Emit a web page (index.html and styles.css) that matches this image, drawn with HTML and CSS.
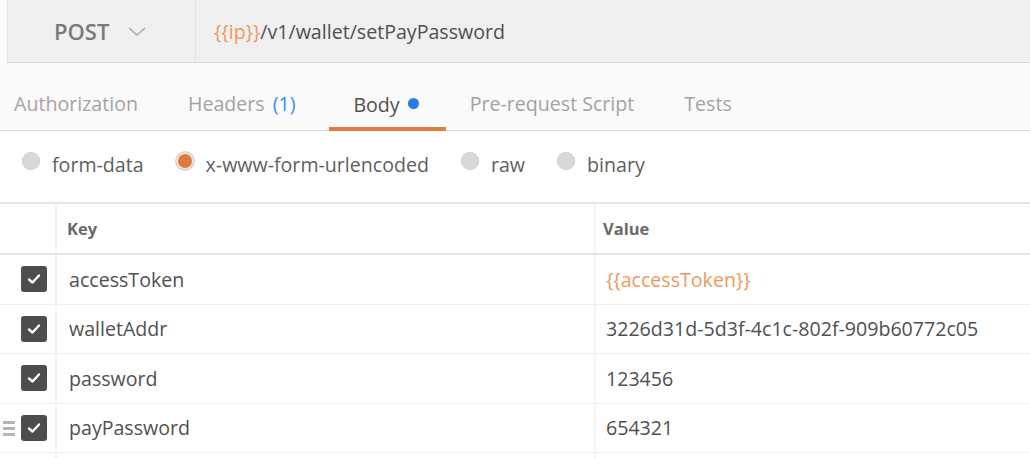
FILE: index.html
```html
<!DOCTYPE html>
<html>
<head>
<meta charset="utf-8">
<link rel="stylesheet" href="styles.css">
</head>
<body>
<div class="top">
  <div class="reqbar">
    <div class="method">
      <span class="method-name">POST</span>
      <svg class="chev" width="18" height="10" viewBox="0 0 18 10"><path d="M1 1 L9 8 L17 1" fill="none" stroke="#a8a8a8" stroke-width="1.6"/></svg>
    </div>
    <div class="url"><span class="var">{{ip}}</span>/v1/wallet/setPayPassword</div>
  </div>
  <div class="tabs">
    <div class="tab first">Authorization</div>
    <div class="tab">Headers <span class="count">(1)</span></div>
    <div class="tab active">Body <span class="dot"></span></div>
    <div class="tab">Pre-request Script</div>
    <div class="tab">Tests</div>
  </div>
</div>
<div class="modes">
  <label class="mode"><span class="radio"></span>form-data</label>
  <label class="mode"><span class="radio on"></span>x-www-form-urlencoded</label>
  <label class="mode"><span class="radio"></span>raw</label>
  <label class="mode"><span class="radio"></span>binary</label>
</div>
<div class="table">
  <div class="row head">
    <div class="c0"></div>
    <div class="c1">Key</div>
    <div class="c2">Value</div>
  </div>
  <div class="row">
    <div class="c0"><span class="cb"><svg width="14" height="12" viewBox="0 0 14 12"><path d="M2 6.5 L5.5 9.5 L12 2.5" fill="none" stroke="#fff" stroke-width="2.4" stroke-linecap="round" stroke-linejoin="round"/></svg></span></div>
    <div class="c1">accessToken</div>
    <div class="c2 var">{{accessToken}}</div>
  </div>
  <div class="row">
    <div class="c0"><span class="cb"><svg width="14" height="12" viewBox="0 0 14 12"><path d="M2 6.5 L5.5 9.5 L12 2.5" fill="none" stroke="#fff" stroke-width="2.4" stroke-linecap="round" stroke-linejoin="round"/></svg></span></div>
    <div class="c1">walletAddr</div>
    <div class="c2">3226d31d-5d3f-4c1c-802f-909b60772c05</div>
  </div>
  <div class="row">
    <div class="c0"><span class="cb"><svg width="14" height="12" viewBox="0 0 14 12"><path d="M2 6.5 L5.5 9.5 L12 2.5" fill="none" stroke="#fff" stroke-width="2.4" stroke-linecap="round" stroke-linejoin="round"/></svg></span></div>
    <div class="c1">password</div>
    <div class="c2">123456</div>
  </div>
  <div class="row">
    <div class="c0"><span class="handle"><i></i><i></i><i></i></span><span class="cb"><svg width="14" height="12" viewBox="0 0 14 12"><path d="M2 6.5 L5.5 9.5 L12 2.5" fill="none" stroke="#fff" stroke-width="2.4" stroke-linecap="round" stroke-linejoin="round"/></svg></span></div>
    <div class="c1">payPassword</div>
    <div class="c2">654321</div>
  </div>
  <div class="row">
    <div class="c0"></div>
    <div class="c1"></div>
    <div class="c2"></div>
  </div>
</div>
</body>
</html>
```

FILE: styles.css
```css
* { box-sizing: border-box; }
html, body { margin: 0; padding: 0; }
body {
  width: 1030px;
  height: 458px;
  overflow: hidden;
  background: #fff;
  font-family: "Open Sans", "Liberation Sans", sans-serif;
  color: #505050;
}
.top { background: #fafafa; }
.reqbar {
  display: flex;
  height: 63px;
  margin-left: 7px;
  background: #efefef;
  border-left: 1px solid #e2e2e2;
  border-bottom: 1px solid #dadada;
}
.method {
  width: 188px;
  display: flex;
  align-items: center;
  padding-left: 46px;
  border-right: 1px solid #e0e0e0;
}
.method-name {
  font-size: 22px;
  font-weight: 600;
  color: #7a7a7a;
}
.chev { margin-left: 19px; margin-top: 1px; }
.url {
  display: flex;
  align-items: center;
  padding-left: 18px;
  font-size: 19.6px;
  color: #505050;
}
.var { color: #ee9a5e; }
.tabs {
  display: flex;
  height: 68px;
  border-bottom: 1px solid #dedede;
}
.tab {
  display: flex;
  align-items: center;
  padding: 14px 25px 0;
  font-size: 19.6px;
  color: #a3a3a3;
  position: relative;
}
.tab.first { padding-left: 14px; }
.tab .count { color: #3d8ee6; margin-left: 8px; }
.tab.active {
  color: #505050;
  padding: 18px 27px 0 24px;
  margin-left: 9px;
  margin-right: -1px;
  border-bottom: 4px solid #e27b3f;
  margin-bottom: -1px;
}
.dot {
  display: inline-block;
  width: 11px;
  height: 11px;
  border-radius: 50%;
  background: #2979e8;
  margin-left: 8px;
  margin-top: -2px;
}
.modes {
  display: flex;
  align-items: center;
  height: 73px;
  border-bottom: 2px solid #e6e6e6;
  padding-left: 22px;
  padding-bottom: 5px;
}
.mode {
  display: flex;
  align-items: center;
  font-size: 19.6px;
  color: #606060;
  margin-right: 32px;
}
.radio {
  width: 18px;
  height: 18px;
  border-radius: 50%;
  background: #d9d9d9;
  margin-right: 12px;
  margin-top: -6px;
  box-shadow: inset 0 0 0 1px #d0d0d0;
}
.radio.on {
  background: #e27a3f;
  box-shadow: inset 0 0 0 2px #e8e8e8, 0 0 0 1px #d8d8d8;
}
.table { display: flex; flex-direction: column; }
.row {
  display: flex;
  height: 49.5px;
  border-bottom: 1px solid #efefef;
}
.row.head {
  height: 51px;
  border-bottom: 2px solid #e4e4e4;
  font-weight: 700;
  color: #6a6a6a;
}
.c0 {
  width: 57px;
  border-right: 2px solid #f3f3f3;
  display: flex;
  align-items: center;
  justify-content: flex-end;
  padding-right: 8px;
  position: relative;
}
.c1 {
  width: 539px;
  border-right: 2px solid #f3f3f3;
  display: flex;
  align-items: center;
  padding-left: 12px;
  font-size: 19.6px;
}
.c2 {
  flex: 1;
  display: flex;
  align-items: center;
  padding-left: 10px;
  font-size: 19.6px;
}
.head .c1 { padding-left: 10px; font-size: 16.5px; }
.head .c2 { padding-left: 7px; font-size: 16.5px; }
.c2.var { color: #ee9a5e; }
.cb {
  width: 26px;
  height: 26px;
  border-radius: 3px;
  background: #4d4d4d;
  display: flex;
  align-items: center;
  justify-content: center;
}
.handle {
  position: absolute;
  left: 3px;
  top: 50%;
  margin-top: -7px;
  display: flex;
  flex-direction: column;
  gap: 3px;
}
.handle i {
  display: block;
  width: 12px;
  height: 3px;
  background: #b5b5b5;
}
```
